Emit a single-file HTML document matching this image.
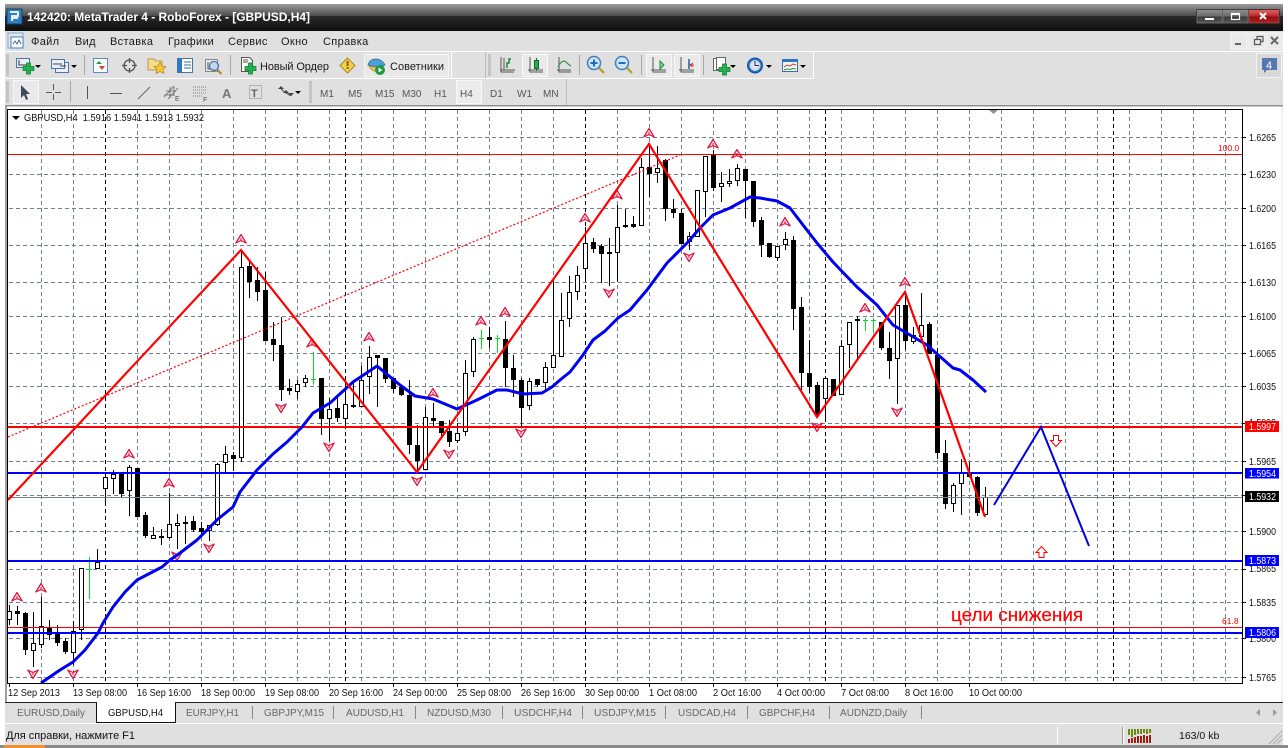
<!DOCTYPE html>
<html><head><meta charset="utf-8"><title>MetaTrader 4</title>
<style>
html,body{margin:0;padding:0;background:#fff;width:1288px;height:748px;overflow:hidden}
svg{display:block;position:absolute;left:0;top:0}
text{font-family:"Liberation Sans","Noto Sans CJK SC",sans-serif;white-space:pre}
.m{font-size:11px;fill:#1a1a1a;letter-spacing:.35px}
.tf{font-size:10px;fill:#555}
.p{font-size:10px;fill:#111}
.t{font-size:10px;fill:#111}
.tb{font-size:10.5px;fill:#666}
.w{fill:#fff;font-size:10px}
</style></head><body>
<svg width="1288" height="748" viewBox="0 0 1288 748" xmlns="http://www.w3.org/2000/svg">
<defs>
<linearGradient id="g1" x1="0" y1="0" x2="0" y2="1"><stop offset="0" stop-color="#9c9c9c"/><stop offset="1" stop-color="#4a4a4a"/></linearGradient>
<linearGradient id="g2" x1="0" y1="0" x2="0" y2="1"><stop offset="0" stop-color="#2b2b2b"/><stop offset="1" stop-color="#0c0c0c"/></linearGradient>
<linearGradient id="gb" x1="0" y1="0" x2="0" y2="1"><stop offset="0" stop-color="#8d8d8d"/><stop offset=".5" stop-color="#6a6a6a"/><stop offset=".5" stop-color="#3a3a3a"/><stop offset="1" stop-color="#555"/></linearGradient>
<linearGradient id="gr" x1="0" y1="0" x2="0" y2="1"><stop offset="0" stop-color="#d66"/><stop offset=".5" stop-color="#b22"/><stop offset=".5" stop-color="#8c0f0f"/><stop offset="1" stop-color="#b02020"/></linearGradient>
<radialGradient id="gc"><stop offset="0" stop-color="#e8f0fa"/><stop offset=".6" stop-color="#cfd8e4"/><stop offset=".75" stop-color="#1f6fc8"/><stop offset="1" stop-color="#0c4a9c"/></radialGradient>
<g id="u"><path d="M0-4.500 5.200 4 0 1.500-5.200 4Z" fill="#fbe3e8" stroke="#dc143c" stroke-width="1.200" stroke-linejoin="round"/><path d="M0-1V2.500" stroke="#dc143c"/></g>
<g id="d"><path d="M0 4.500 5.200-4 0-1.500-5.200-4Z" fill="#fbe3e8" stroke="#dc143c" stroke-width="1.200" stroke-linejoin="round"/><path d="M0 1V-2.500" stroke="#dc143c"/></g>
<path id="dd" d="M0 0h6l-3 3z" fill="#000"/>
<g id="grip"><path d="M0 0h3M0 2h3M0 4h3M0 6h3M0 8h3M0 10h3M0 12h3M0 14h3M0 16h3M0 18h3M0 20h3" stroke="#a8a8a8" stroke-width="1"/></g>
<g id="plus"><path d="M3.500 0h4v3.500h3.500v4h-3.500v3.500h-4v-3.500h-3.500v-4h3.500z" fill="#22b14c" stroke="#0c7a2c" stroke-width=".7"/></g>
</defs>

<!-- window chrome -->
<rect x="5" y="4" width="1278" height="12" fill="url(#g1)"/>
<rect x="5" y="16" width="1278" height="15" fill="url(#g2)"/>
<rect x="7" y="9" width="15" height="15" fill="#2f7fc0" stroke="#0e3f6e"/>
<path d="M10 12h8v4h-6v5M12 18h6" fill="none" stroke="#fff" stroke-width="1.800"/>
<text x="27" y="21" font-size="12" font-weight="700" fill="#fff" textLength="283" lengthAdjust="spacing">142420: MetaTrader 4 - RoboForex - [GBPUSD,H4]</text>
<rect x="1196" y="9" width="84" height="15" rx="2" fill="#222"/>
<rect x="1197" y="10" width="25" height="13" fill="url(#gb)" stroke="#888" stroke-width=".6"/>
<rect x="1223" y="10" width="25" height="13" fill="url(#gb)" stroke="#888" stroke-width=".6"/>
<rect x="1249" y="10" width="30" height="13" fill="url(#gr)" stroke="#a55" stroke-width=".6"/>
<rect x="1205" y="18" width="9" height="2" fill="#fff"/>
<rect x="1231.500" y="13.500" width="8" height="6" fill="none" stroke="#fff" stroke-width="1.200"/><rect x="1231" y="13" width="9" height="2" fill="#fff"/>
<path d="M1260 13l6 6m0-6l-6 6" stroke="#fff" stroke-width="2"/>

<!-- bars -->
<rect x="5" y="31" width="1278" height="75" fill="#e0e0e0"/>
<rect x="5" y="51" width="1278" height="1" fill="#fff"/>
<rect x="5" y="78" width="808" height="1" fill="#fff"/>
<rect x="813" y="52" width="1" height="27" fill="#fff"/>
<rect x="451" y="52" width="1" height="26" fill="#fff"/>
<rect x="485" y="52" width="1" height="26" fill="#bbb"/>
<rect x="566" y="79" width="1" height="26" fill="#bbb"/>
<rect x="5" y="105" width="1278" height="1" fill="#8f8f8f"/>
<rect x="5" y="106" width="1278" height="1" fill="#c8c8c8"/>

<!-- menu -->
<rect x="8" y="33" width="15" height="15" fill="#dfe8f5" stroke="#8aa7d0"/>
<rect x="11" y="37" width="12" height="11" fill="#fff" stroke="#4a7ab8"/>
<path d="M13 44l2-3 2 3 2-4 2 4" fill="none" stroke="#3a6aa8"/>
<text class="m" x="31" y="45">Файл</text>
<text class="m" x="75" y="45">Вид</text>
<text class="m" x="110" y="45">Вставка</text>
<text class="m" x="168" y="45">Графики</text>
<text class="m" x="228" y="45">Сервис</text>
<text class="m" x="281" y="45">Окно</text>
<text class="m" x="323" y="45">Справка</text>
<!-- mdi -->
<rect x="1231" y="33" width="16" height="16" fill="#e9e9e9" stroke="#f6f6f6"/>
<rect x="1235" y="43" width="6" height="2" fill="#666"/>
<rect x="1249" y="33" width="16" height="16" fill="#e9e9e9" stroke="#f6f6f6"/>
<path d="M1254.500 39.500h6v5h-6zM1257 39v-2.500h6v5h-2.500" fill="none" stroke="#555" stroke-width="1.200"/>
<rect x="1267" y="33" width="15" height="16" fill="#e9e9e9" stroke="#f6f6f6"/>
<path d="M1271 37l7 7m0-7l-7 7" stroke="#666" stroke-width="2"/>
<rect x="1256.500" y="53.500" width="25" height="24" fill="#d8d8d8" stroke="#f2f2f2"/>
<path d="M1262 58h15v12h-10l-3 3v-3h-2z" fill="#5577b0"/>
<text x="1266" y="69" font-size="11" fill="#fff">4</text>

<!-- toolbar 1 -->
<use href="#grip" x="6" y="55"/>
<rect x="16.500" y="58.500" width="13" height="9" fill="#e8f0fa" stroke="#4a74a8"/><path d="M19 60v5h8" stroke="#333" fill="none"/>
<use href="#plus" x="23" y="63"/>
<use href="#dd" x="35" y="65"/>
<rect x="55.500" y="62.500" width="13" height="10" fill="#eef" stroke="#4a74a8"/>
<rect x="51.500" y="59.500" width="13" height="9" fill="#e8f0fa" stroke="#4a74a8"/>
<path d="M53 64h9M60 66h6" stroke="#444"/>
<use href="#dd" x="71" y="65"/>
<rect x="84" y="55" width="1" height="20" fill="#a8a8a8"/>
<rect x="93.500" y="58.500" width="14" height="14" fill="#f8fbff" stroke="#5b8cc0"/>
<path d="M96 64l3-3 3 3z" fill="#2a9a3c"/><path d="M99 66l3 4 3-4z" fill="#e04030"/>
<circle cx="129.500" cy="65.500" r="5.500" fill="none" stroke="#555" stroke-width="1.300"/>
<path d="M129.500 58v5M129.500 68v5M122 65.500h5M132 65.500h5" stroke="#555" stroke-width="1.300"/>
<path d="M148 59h6l2 2h6v9h-14z" fill="#f6dc8a" stroke="#b79a4a"/>
<path d="M160 62l2 4 4 .5-3 3 1 4-4-2-4 2 1-4-3-3 4-.5z" fill="#f2c93a" stroke="#b08a1c" stroke-width=".7"/>
<rect x="177.500" y="58.500" width="15" height="14" fill="#fff" stroke="#4a74a8"/><rect x="178" y="59" width="4" height="13" fill="#2a78c8"/><path d="M184 62h7M184 65h7M184 68h7" stroke="#3a6aa8"/>
<rect x="205.500" y="59.500" width="12" height="12" fill="#e8e8ee" stroke="#888"/><path d="M208 62v7h7" stroke="#555" fill="none"/>
<circle cx="214" cy="66" r="4.500" fill="#bcd6ee" fill-opacity=".8" stroke="#4a74a8" stroke-width="1.300"/><path d="M217.500 70l4 4" stroke="#b08a1c" stroke-width="2"/>
<rect x="230" y="55" width="1" height="20" fill="#a8a8a8"/>
<path d="M241.500 57.500h8l3 3v11h-11z" fill="#fff" stroke="#555"/><path d="M243 60h5M243 62h5" stroke="#555"/>
<use href="#plus" x="245" y="63"/>
<text class="m" x="260" y="70" style="letter-spacing:0" textLength="69" lengthAdjust="spacing">Новый Ордер</text>
<path d="M347.500 58l7.500 7.500-7.500 7.500-7.500-7.500z" fill="#f4cf4a" stroke="#a88a1c"/><rect x="346.600" y="61" width="2" height="5" fill="#8a5a10"/><rect x="346.600" y="67" width="2" height="2" fill="#8a5a10"/>
<rect x="364.500" y="54.500" width="84" height="22" fill="#e8e8e8" stroke="#f6f6f6"/>
<path d="M368 65c1-4 4-6 8-6s8 3 9 6c-5 2-11 2-17 0z" fill="#4aa0d8" stroke="#2a6a98" stroke-width=".7"/>
<path d="M369 66c3 1 5 1 8 1v4c-4 1-7-2-8-5z" fill="#f0c060" stroke="#a08030" stroke-width=".6"/>
<circle cx="380" cy="70" r="5" fill="#1c9a3c"/><path d="M378.500 67.500v5l4-2.500z" fill="#fff"/>
<text class="m" x="390" y="70" style="letter-spacing:0" textLength="54" lengthAdjust="spacing">Советники</text>

<use href="#grip" x="488" y="55"/>
<path d="M501 57v15h13M500 70h15M504 58v12" stroke="#555" fill="none"/><path d="M507 68v-5h2v-4h2" stroke="#1c8a3c" stroke-width="1.500" fill="none"/>
<rect x="522.500" y="54.500" width="25" height="22" fill="#eaeaea" stroke="#f8f8f8"/>
<path d="M530 57v15h13M528 70h15" stroke="#555" fill="none"/><rect x="534.500" y="60.500" width="4" height="8" fill="#22b14c" stroke="#0c6a2c"/><path d="M536.500 58v2M536.500 69v2" stroke="#0c6a2c"/>
<path d="M559 57v15h12M557 70h14" stroke="#555" fill="none"/><path d="M558 67c3-6 6-7 8-5s3 3 5 4" stroke="#2a8a50" fill="none" stroke-width="1.100"/>
<rect x="579" y="55" width="1" height="20" fill="#a8a8a8"/>
<circle cx="594" cy="63" r="6.500" fill="#cfe4f6" stroke="#3f7fc0" stroke-width="1.500"/><path d="M590.500 63h7M594 59.500v7" stroke="#1f6fb8" stroke-width="2"/><path d="M599 68l5 5" stroke="#c0a030" stroke-width="2.500"/>
<circle cx="622" cy="63" r="6.500" fill="#cfe4f6" stroke="#3f7fc0" stroke-width="1.500"/><path d="M618.500 63h7" stroke="#1f6fb8" stroke-width="2"/><path d="M627 68l5 5" stroke="#c0a030" stroke-width="2.500"/>
<rect x="641" y="55" width="1" height="20" fill="#a8a8a8"/>
<rect x="646.500" y="54.500" width="25" height="22" fill="#eaeaea" stroke="#f8f8f8"/>
<path d="M653 57v15h13M651 70h15" stroke="#555" fill="none"/><path d="M660 61l4 4-4 4z" fill="#8fd8a0" stroke="#1c8a3c"/>
<rect x="674.500" y="54.500" width="25" height="22" fill="#eaeaea" stroke="#f8f8f8"/>
<path d="M681 57v15h13M679 70h15" stroke="#555" fill="none"/><path d="M689 59v10" stroke="#1f5fb0" stroke-width="1.500"/><path d="M690 65h4M693 63l-3 2 3 2" stroke="#d03020" fill="none"/>
<rect x="703" y="55" width="1" height="20" fill="#a8a8a8"/>
<rect x="713.500" y="58.500" width="9" height="12" fill="#fff" stroke="#666"/><rect x="716.500" y="57.500" width="9" height="12" fill="#fff" stroke="#666"/><use href="#plus" x="719" y="64"/>
<use href="#dd" x="730" y="65"/>
<circle cx="755" cy="65.500" r="8" fill="url(#gc)"/><path d="M755 61v4.500h4" stroke="#334" fill="none"/>
<use href="#dd" x="766" y="65"/>
<rect x="782.500" y="59.500" width="15" height="12" fill="#f4f4f4" stroke="#3f6fa8"/><rect x="782" y="59" width="16" height="3" fill="#2a78c8"/><path d="M784 67l3-2 3 1 3-2 3 1" stroke="#b8402a" fill="none"/><path d="M784 70l3-1 3 .5 3-1 3 .5" stroke="#2a9a3c" fill="none"/>
<use href="#dd" x="800" y="65"/>

<!-- toolbar 2 -->
<use href="#grip" x="6" y="82"/>
<rect x="13.500" y="80.500" width="25" height="23" fill="#eaeaea" stroke="#f8f8f8"/>
<path d="M21 85v13l3-3 2 5 2-1-2-5h4z" fill="#3c4a5a"/>
<path d="M53.500 84v6M53.500 94v6M46 92.500h6M55 92.500h6" stroke="#555"/>
<rect x="70" y="81" width="1" height="21" fill="#a8a8a8"/>
<rect x="87" y="86" width="1" height="13" fill="#555"/>
<rect x="110" y="93" width="12" height="1" fill="#555"/>
<path d="M138 99l12-12" stroke="#666"/>
<path d="M164 97l10-11M168 99l10-11M166 91h10M164 95h10M170 87v11M174 87v9" stroke="#666" fill="none" stroke-width=".8"/><text x="175" y="101" font-size="7" fill="#555">E</text>
<path d="M193 87h14M193 90h14M193 93h14M193 96h9" stroke="#777" stroke-dasharray="1 1"/><text x="203" y="102" font-size="7" fill="#555">F</text>
<text x="222" y="98" font-size="13" font-weight="700" fill="#777">A</text>
<rect x="249.500" y="85.500" width="12" height="13" fill="none" stroke="#888" stroke-dasharray="1 1"/><text x="251" y="97" font-size="11" font-weight="700" fill="#666">T</text>
<path d="M278 89l3-3 3 3zM288 93l3 3 3-3zM283 93l3-3 3 3z" fill="#444"/><path d="M281 89l5 4 5 3" stroke="#444" fill="none"/>
<use href="#dd" x="295" y="91"/>
<use href="#grip" x="309" y="82"/>
<text class="tf" x="320" y="97">M1</text>
<text class="tf" x="348" y="97">M5</text>
<text class="tf" x="375" y="97">M15</text>
<text class="tf" x="402" y="97">M30</text>
<text class="tf" x="434" y="97">H1</text>
<rect x="456.500" y="80.500" width="25" height="23" fill="#ececec" stroke="#f8f8f8"/>
<text class="tf" x="460" y="97">H4</text>
<text class="tf" x="490" y="97">D1</text>
<text class="tf" x="517" y="97">W1</text>
<text class="tf" x="543" y="97">MN</text>

<!-- side rails -->
<rect x="5" y="106" width="2" height="597" fill="#a0a0a0"/>
<rect x="1281" y="107" width="2" height="596" fill="#f2f2f2"/>

<!-- chart -->
<rect x="8" y="109" width="1234" height="574" fill="#fff"/>
<g stroke="#708090" stroke-width="1" stroke-dasharray="4 3" shape-rendering="crispEdges" fill="none">
<path d="M9 137.500H1242M9 174.500H1242M9 208.500H1242M9 245.500H1242M9 282.500H1242M9 316.500H1242M9 353.500H1242M9 386.500H1242M9 423.500H1242M9 461.500H1242M9 495.500H1242M9 531.500H1242M9 569.500H1242M9 602.500H1242M9 638.500H1242M9 677.500H1242"/>
<path d="M41.500 110V683M73.500 110V683M137.500 110V683M169.500 110V683M201.500 110V683M233.500 110V683M265.500 110V683M297.500 110V683M329.500 110V683M361.500 110V683M393.500 110V683M425.500 110V683M457.500 110V683M489.500 110V683M521.500 110V683M553.500 110V683M617.500 110V683M649.500 110V683M681.500 110V683M713.500 110V683M745.500 110V683M777.500 110V683M809.500 110V683M841.500 110V683M873.500 110V683M905.500 110V683M937.500 110V683M969.500 110V683M1001.500 110V683M1033.500 110V683M1065.500 110V683M1097.500 110V683M1129.500 110V683M1161.500 110V683M1193.500 110V683M1225.500 110V683"/>
</g>
<path d="M105.500 110V683M345.500 110V683M585.500 110V683M825.500 110V683M1113.500 110V683" stroke="#000" stroke-dasharray="4 3" shape-rendering="crispEdges" fill="none"/>

<!-- wicks -->
<path shape-rendering="crispEdges" stroke="#000" fill="none" d="M9.500 605V625M17.500 606V625M25.500 612V655M33.500 612V667M41.500 597V648M49.500 620V640M57.500 625V646M65.500 638V654M73.500 621V665M81.500 568V640M97.500 549V569M105.500 475V502M113.500 470V494M121.500 473V497M129.500 465V516M137.500 468V517M145.500 512V538M153.500 527V539M161.500 529V545M169.500 493V539M177.500 514V549M185.500 516V544M193.500 516V532M201.500 522V535M209.500 525V541M217.500 463V526M225.500 446V472M233.500 452V471M241.500 250V462M249.500 262V298M257.500 267V301M265.500 272V341M273.500 322V361M281.500 317V401M289.500 379V395M297.500 380V399M305.500 375V387M321.500 378V435M329.500 398V441M337.500 398V422M345.500 390V428M353.500 382V408M361.500 366V407M369.500 346V394M377.500 355V407M385.500 358V383M393.500 378V393M401.500 387V396M409.500 380V454M417.500 425V472M425.500 407V470M433.500 403V427M441.500 421V437M449.500 420V447M457.500 423V443M465.500 360V436M473.500 337V377M489.500 327V348M505.500 321V387M513.500 355V397M521.500 378V427M529.500 378V410M537.500 379V387M545.500 362V392M553.500 280V368M561.500 293V357M569.500 276V327M577.500 266V300M585.500 227V279M593.500 238V253M601.500 244V283M609.500 238V286M617.500 205V282M625.500 209V228M633.500 216V228M641.500 158V226M649.500 143V197M657.500 146V183M665.500 159V221M673.500 199V218M681.500 209V244M689.500 232V250M697.500 190V237M705.500 156V217M713.500 150V191M721.500 172V202M729.500 169V187M737.500 164V186M745.500 169V218M753.500 181V227M761.500 217V257M769.500 243V258M777.500 246V261M785.500 232V250M793.500 236V330M801.500 297V390M809.500 340V393M817.500 382V415M825.500 378V420M833.500 379V396M841.500 340V395M849.500 322V368M857.500 316V360M881.500 322V350M889.500 332V379M897.500 305V404M905.500 295V350M913.500 327V344M921.500 293V337M929.500 322V354M937.500 348V459M945.500 440V509M953.500 483V512M961.500 459V515M969.500 462V477M977.500 476V516M985.500 487V515"/>
<!-- green doji -->
<path shape-rendering="crispEdges" stroke="#00e020" fill="none" d="M89.500 557V599M87 569.500h5M313.500 352V385M311 379.500h5M481.500 330V349M479 338.500h5M497.500 335V353M495 338.500h5M865.500 318V331M863 320.500h5M873.500 318V333M871 320.500h5"/>
<!-- black bodies -->
<path shape-rendering="crispEdges" fill="#000" d="M15 611h5v3h-5zM23 613h5v37h-5zM47 627h5v8h-5zM55 634h5v9h-5zM63 641h5v11h-5zM119 473h5v21h-5zM135 468h5v49h-5zM143 515h5v21h-5zM159 536h5v2h-5zM191 521h5v9h-5zM199 528h5v4h-5zM231 455h5v4h-5zM247 266h5v16h-5zM255 280h5v12h-5zM263 290h5v51h-5zM271 339h5v6h-5zM279 345h5v45h-5zM287 388h5v3h-5zM319 378h5v41h-5zM335 408h5v10h-5zM351 405h5v2h-5zM375 355h5v3h-5zM383 358h5v21h-5zM391 378h5v11h-5zM399 387h5v8h-5zM407 395h5v50h-5zM415 445h5v16h-5zM431 418h5v3h-5zM439 421h5v12h-5zM447 431h5v11h-5zM487 337h5v3h-5zM503 339h5v29h-5zM511 368h5v12h-5zM519 380h5v28h-5zM535 379h5v6h-5zM591 242h5v7h-5zM599 246h5v8h-5zM607 252h5v2h-5zM623 225h5v2h-5zM631 224h5v3h-5zM647 167h5v7h-5zM663 160h5v49h-5zM671 209h5v4h-5zM679 213h5v31h-5zM711 155h5v33h-5zM743 169h5v12h-5zM751 181h5v41h-5zM759 220h5v25h-5zM767 243h5v14h-5zM791 240h5v69h-5zM799 307h5v66h-5zM807 373h5v14h-5zM815 385h5v30h-5zM831 379h5v17h-5zM855 319h5v2h-5zM879 322h5v26h-5zM887 348h5v13h-5zM903 305h5v36h-5zM927 324h5v30h-5zM935 355h5v98h-5zM943 453h5v51h-5zM967 474h5v3h-5zM975 477h5v36h-5z"/>
<!-- white bodies -->
<path shape-rendering="crispEdges" fill="#fff" stroke="#000" d="M7.500 611.500h4v8h-4zM31.500 643.500h4v7h-4zM39.500 626.500h4v18h-4zM71.500 631.500h4v21h-4zM79.500 568.500h4v61h-4zM95.500 562.500h4v6h-4zM103.500 477.500h4v11h-4zM111.500 474.500h4v4h-4zM127.500 467.500h4v23h-4zM151.500 535.500h4v3h-4zM167.500 524.500h4v13h-4zM175.500 523.500h4v2h-4zM183.500 522.500h4v1h-4zM207.500 525.500h4v5h-4zM215.500 464.500h4v60h-4zM223.500 454.500h4v8h-4zM239.500 267.500h4v190h-4zM295.500 384.500h4v7h-4zM303.500 378.500h4v4h-4zM327.500 409.500h4v9h-4zM343.500 404.500h4v14h-4zM359.500 380.500h4v26h-4zM367.500 357.500h4v19h-4zM423.500 417.500h4v52h-4zM455.500 433.500h4v7h-4zM463.500 373.500h4v58h-4zM471.500 339.500h4v32h-4zM527.500 381.500h4v24h-4zM543.500 367.500h4v15h-4zM551.500 355.500h4v12h-4zM559.500 320.500h4v36h-4zM567.500 292.500h4v26h-4zM575.500 275.500h4v16h-4zM583.500 243.500h4v25h-4zM615.500 227.500h4v25h-4zM639.500 167.500h4v58h-4zM655.500 168.500h4v4h-4zM687.500 236.500h4v5h-4zM695.500 190.500h4v46h-4zM703.500 156.500h4v35h-4zM719.500 183.500h4v3h-4zM727.500 181.500h4v2h-4zM735.500 168.500h4v12h-4zM775.500 246.500h4v11h-4zM783.500 239.500h4v5h-4zM823.500 378.500h4v20h-4zM839.500 346.500h4v48h-4zM847.500 322.500h4v22h-4zM895.500 305.500h4v53h-4zM911.500 335.500h4v6h-4zM919.500 325.500h4v11h-4zM951.500 485.500h4v18h-4zM959.500 473.500h4v10h-4zM983.500 497.500h4v17h-4z"/>

<!-- markers -->
<g>
<use href="#u" x="17" y="597"/><use href="#u" x="41" y="588"/><use href="#u" x="129" y="454"/><use href="#u" x="169" y="483"/><use href="#u" x="241" y="239"/><use href="#u" x="312" y="343"/><use href="#u" x="369" y="337"/><use href="#u" x="433" y="393"/><use href="#u" x="481" y="321"/><use href="#u" x="505" y="312"/><use href="#u" x="585" y="218"/><use href="#u" x="617" y="195"/><use href="#u" x="649" y="133"/><use href="#u" x="713" y="144"/><use href="#u" x="737" y="154"/><use href="#u" x="785" y="222"/><use href="#u" x="865" y="308"/><use href="#u" x="905" y="282"/>
<use href="#d" x="33" y="674"/><use href="#d" x="73" y="674"/><use href="#d" x="177" y="556"/><use href="#d" x="209" y="548"/><use href="#d" x="281" y="408"/><use href="#d" x="329" y="447"/><use href="#d" x="417" y="481"/><use href="#d" x="449" y="454"/><use href="#d" x="521" y="433"/><use href="#d" x="609" y="293"/><use href="#d" x="689" y="257"/><use href="#d" x="817" y="427"/><use href="#d" x="897" y="412"/>
</g>

<!-- trend dotted -->
<path d="M8 437L680 155" stroke="#ff0000" stroke-width="1.200" stroke-dasharray="2 2" fill="none"/>

<!-- horizontal levels -->
<g shape-rendering="crispEdges">
<rect x="8" y="154" width="1234" height="1" fill="#ff0000"/>
<rect x="8" y="497" width="1234" height="1" fill="#708090"/>
<rect x="8" y="627" width="1234" height="1" fill="#ff0000"/>
<rect x="8" y="426" width="1234" height="2" fill="#ff0000"/>
<rect x="8" y="472" width="1234" height="2" fill="#0000ff"/>
<rect x="8" y="560" width="1234" height="2" fill="#0000ff"/>
<rect x="8" y="632" width="1234" height="2" fill="#0000ff"/>
</g>

<!-- moving average -->
<polyline fill="none" stroke="#0000f0" stroke-width="3" stroke-linejoin="round" points="41,683 60,670 73,662 85,650 98,633 103,623 113,607 125,592 137,580 162,567 170,560 180,553 197,540 209,528 218,519 233,507 240,492 257,470 273,454 287,442 302,427 313,413 330,403 353,382 377,366 400,385 415,396 433,399 457,409 477,400 497,390 507,390 523,394 542,393 552,387 560,380 570,372 583,355 593,340 605,331 618,318 630,310 647,290 667,263 688,242 700,228 713,215 730,208 750,197 760,198 777,201 790,208 803,225 817,243 833,262 857,287 877,305 893,325 927,345 953,368 960,370 973,380 986,392"/>
<!-- zigzag -->
<polyline fill="none" stroke="#ff0000" stroke-width="2.200" points="8,500 241,250 417,472 649,144 817,417 905,292 985,517"/>
<!-- forecast -->
<polyline fill="none" stroke="#0000e0" stroke-width="2" points="994,505 1041,427 1089,546"/>
<!-- hollow arrows -->
<path d="M1053.500 435.500h5v5h3l-5.500 6-5.500-6h3z" fill="#fff" stroke="#ff0000"/>
<path d="M1039 557.500h5v-5h3l-5.500-6-5.500 6h3z" fill="#fff" stroke="#ff0000"/>
<!-- shift marker -->
<path d="M988 109h11l-5.500 5z" fill="#8f8f8f"/>

<!-- chart text -->
<text x="951" y="621" font-size="18.900" fill="#ff0000" stroke="#ff0000" stroke-width=".2">цели снижения</text>
<text x="1218" y="151" font-size="8.500" fill="#ff0000">100.0</text>
<text x="1222" y="624" font-size="8.500" fill="#ff0000">61.8</text>
<path d="M12 116h8l-4 4z" fill="#000"/>
<text x="24" y="121" class="p" textLength="180" lengthAdjust="spacingAndGlyphs">GBPUSD,H4  1.5916 1.5941 1.5913 1.5932</text>

<!-- chart border -->
<path d="M7.500 109.500H1242.500V683.500H7.500z" fill="none" stroke="#000" shape-rendering="crispEdges"/>

<!-- price axis -->
<path shape-rendering="crispEdges" stroke="#000" d="M1243 137.500h3M1243 174.500h3M1243 208.500h3M1243 245.500h3M1243 282.500h3M1243 316.500h3M1243 353.500h3M1243 386.500h3M1243 423.500h3M1243 461.500h3M1243 495.500h3M1243 531.500h3M1243 569.500h3M1243 602.500h3M1243 638.500h3M1243 677.500h3"/>
<g>
<text class="p" x="1249" y="141" textLength="27" lengthAdjust="spacingAndGlyphs">1.6265</text>
<text class="p" x="1249" y="178" textLength="27" lengthAdjust="spacingAndGlyphs">1.6230</text>
<text class="p" x="1249" y="212" textLength="27" lengthAdjust="spacingAndGlyphs">1.6200</text>
<text class="p" x="1249" y="249" textLength="27" lengthAdjust="spacingAndGlyphs">1.6165</text>
<text class="p" x="1249" y="286" textLength="27" lengthAdjust="spacingAndGlyphs">1.6130</text>
<text class="p" x="1249" y="320" textLength="27" lengthAdjust="spacingAndGlyphs">1.6100</text>
<text class="p" x="1249" y="357" textLength="27" lengthAdjust="spacingAndGlyphs">1.6065</text>
<text class="p" x="1249" y="390" textLength="27" lengthAdjust="spacingAndGlyphs">1.6035</text>
<text class="p" x="1249" y="426" textLength="27" lengthAdjust="spacingAndGlyphs">1.5999</text>
<text class="p" x="1249" y="465" textLength="27" lengthAdjust="spacingAndGlyphs">1.5965</text>
<text class="p" x="1249" y="499" textLength="27" lengthAdjust="spacingAndGlyphs">1.5930</text>
<text class="p" x="1249" y="535" textLength="27" lengthAdjust="spacingAndGlyphs">1.5900</text>
<text class="p" x="1249" y="572" textLength="27" lengthAdjust="spacingAndGlyphs">1.5865</text>
<text class="p" x="1249" y="606" textLength="27" lengthAdjust="spacingAndGlyphs">1.5835</text>
<text class="p" x="1249" y="642" textLength="27" lengthAdjust="spacingAndGlyphs">1.5800</text>
<text class="p" x="1249" y="681" textLength="27" lengthAdjust="spacingAndGlyphs">1.5765</text>
</g>
<rect x="1245" y="421" width="34" height="11" fill="#ff0000"/><text class="w" x="1249" y="430" textLength="27" lengthAdjust="spacingAndGlyphs">1.5997</text>
<rect x="1245" y="468" width="34" height="10.500" fill="#0000ff"/><text class="w" x="1249" y="477" textLength="27" lengthAdjust="spacingAndGlyphs">1.5954</text>
<rect x="1245" y="491" width="34" height="11" fill="#000"/><text class="w" x="1249" y="500" textLength="27" lengthAdjust="spacingAndGlyphs">1.5932</text>
<rect x="1245" y="555" width="34" height="11" fill="#0000ff"/><text class="w" x="1249" y="564" textLength="27" lengthAdjust="spacingAndGlyphs">1.5873</text>
<rect x="1245" y="627" width="34" height="11" fill="#0000ff"/><text class="w" x="1249" y="636" textLength="27" lengthAdjust="spacingAndGlyphs">1.5806</text>

<!-- time axis -->
<path shape-rendering="crispEdges" stroke="#000" d="M9.500 684v3M73.500 684v3M137.500 684v3M201.500 684v3M265.500 684v3M329.500 684v3M393.500 684v3M457.500 684v3M521.500 684v3M585.500 684v3M649.500 684v3M713.500 684v3M777.500 684v3M841.500 684v3M905.500 684v3M969.500 684v3"/>
<g>
<text class="t" x="8" y="696" textLength="52" lengthAdjust="spacingAndGlyphs">12 Sep 2013</text>
<text class="t" x="73" y="696" textLength="54" lengthAdjust="spacingAndGlyphs">13 Sep 08:00</text>
<text class="t" x="137" y="696" textLength="54" lengthAdjust="spacingAndGlyphs">16 Sep 16:00</text>
<text class="t" x="201" y="696" textLength="54" lengthAdjust="spacingAndGlyphs">18 Sep 00:00</text>
<text class="t" x="265" y="696" textLength="54" lengthAdjust="spacingAndGlyphs">19 Sep 08:00</text>
<text class="t" x="329" y="696" textLength="54" lengthAdjust="spacingAndGlyphs">20 Sep 16:00</text>
<text class="t" x="393" y="696" textLength="54" lengthAdjust="spacingAndGlyphs">24 Sep 00:00</text>
<text class="t" x="457" y="696" textLength="54" lengthAdjust="spacingAndGlyphs">25 Sep 08:00</text>
<text class="t" x="521" y="696" textLength="54" lengthAdjust="spacingAndGlyphs">26 Sep 16:00</text>
<text class="t" x="585" y="696" textLength="54" lengthAdjust="spacingAndGlyphs">30 Sep 00:00</text>
<text class="t" x="649" y="696" textLength="48" lengthAdjust="spacingAndGlyphs">1 Oct 08:00</text>
<text class="t" x="713" y="696" textLength="48" lengthAdjust="spacingAndGlyphs">2 Oct 16:00</text>
<text class="t" x="777" y="696" textLength="48" lengthAdjust="spacingAndGlyphs">4 Oct 00:00</text>
<text class="t" x="841" y="696" textLength="48" lengthAdjust="spacingAndGlyphs">7 Oct 08:00</text>
<text class="t" x="905" y="696" textLength="48" lengthAdjust="spacingAndGlyphs">8 Oct 16:00</text>
<text class="t" x="969" y="696" textLength="53" lengthAdjust="spacingAndGlyphs">10 Oct 00:00</text>
</g>

<!-- tabs -->
<rect x="5" y="703" width="1278" height="20" fill="#e0e0e0"/>
<rect x="5" y="702" width="1278" height="1" fill="#222"/>
<path d="M96.500 702.500V722.500H175.500V703" fill="#fff" stroke="#111" shape-rendering="crispEdges"/>
<rect x="97" y="702" width="78" height="1" fill="#fff"/>
<text class="tb" x="17" y="716" textLength="68" lengthAdjust="spacingAndGlyphs">EURUSD,Daily</text>
<text class="tb" x="108" y="716" style="fill:#111" textLength="55" lengthAdjust="spacingAndGlyphs">GBPUSD,H4</text>
<text class="tb" x="186" y="716" textLength="53" lengthAdjust="spacingAndGlyphs">EURJPY,H1</text>
<text class="tb" x="264" y="716" textLength="60" lengthAdjust="spacingAndGlyphs">GBPJPY,M15</text>
<text class="tb" x="346" y="716" textLength="58" lengthAdjust="spacingAndGlyphs">AUDUSD,H1</text>
<text class="tb" x="427" y="716" textLength="64" lengthAdjust="spacingAndGlyphs">NZDUSD,M30</text>
<text class="tb" x="514" y="716" textLength="58" lengthAdjust="spacingAndGlyphs">USDCHF,H4</text>
<text class="tb" x="594" y="716" textLength="62" lengthAdjust="spacingAndGlyphs">USDJPY,M15</text>
<text class="tb" x="678" y="716" textLength="58" lengthAdjust="spacingAndGlyphs">USDCAD,H4</text>
<text class="tb" x="759" y="716" textLength="56" lengthAdjust="spacingAndGlyphs">GBPCHF,H4</text>
<text class="tb" x="840" y="716" textLength="67" lengthAdjust="spacingAndGlyphs">AUDNZD,Daily</text>
<path shape-rendering="crispEdges" stroke="#888" d="M252.500 706v13M333.500 706v13M415.500 706v13M502.500 706v13M582.500 706v13M665.500 706v13M747.500 706v13M829.500 706v13M921.500 706v13"/>
<path d="M1260 709v7l-4-3.500z" fill="#999"/><path d="M1273 709v7l4-3.500z" fill="#999"/>

<!-- status -->
<rect x="5" y="723" width="1278" height="1" fill="#fff"/>
<rect x="5" y="724" width="1278" height="21" fill="#e0e0e0"/>
<rect x="0" y="745" width="1288" height="3" fill="#8a8a8a"/>
<rect x="4" y="745" width="41" height="3" fill="#f09030"/>
<text x="6" y="739" font-size="11" fill="#111" textLength="129" lengthAdjust="spacing">Для справки, нажмите F1</text>
<rect x="1057" y="727" width="1" height="17" fill="#fff"/><rect x="1122" y="727" width="1" height="17" fill="#999"/><rect x="1123" y="727" width="1" height="17" fill="#fff"/>
<path shape-rendering="crispEdges" stroke="#6a8a10" stroke-width="2" d="M1129 729v6M1132 729v8M1135 729v6M1138 729v5M1141 729v5M1144 729v4M1147 729v5M1150 729v4"/>
<path shape-rendering="crispEdges" stroke="#a02010" stroke-width="2" d="M1129 739v4M1132 738v5M1135 737v6M1138 736v7M1141 736v7M1144 735v8M1147 736v7M1150 735v8"/>
<text x="1179" y="739" font-size="10.500" fill="#111">163/0 kb</text>
<path d="M1282 731l-13 13M1282 735l-9 9M1282 739l-5 5" stroke="#aaa" fill="none"/>
</svg>
</body></html>
